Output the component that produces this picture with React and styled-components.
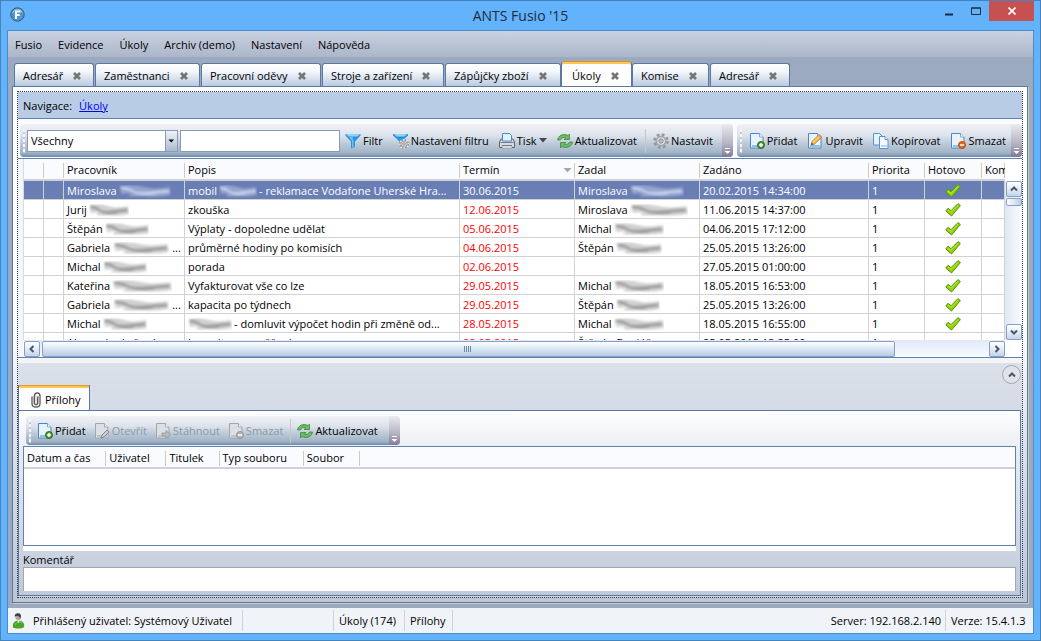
import React from "react";
import styled, { createGlobalStyle, css } from "styled-components";

const GlobalStyle = createGlobalStyle`
  * { box-sizing: border-box; }
  body {
    margin: 0;
    font: 11px/16px "Open Sans", "Noto Sans", sans-serif;
    color: #000;
  }
  button, input, select, textarea { font: inherit; color: inherit; }
  button { border: 0; padding: 0; background: none; white-space: nowrap; }
  svg { display: block; flex: none; }
`;

const line = "#5f83ad";
const tabLine = "#5b799f";

/* ---------- window chrome ---------- */

const Window = styled.div`
  min-height: 100vh;
  display: flex;
  flex-direction: column;
  padding: 0 6px 6px;
  border: 1px solid #4583bd;
  background: #63b2fc;
`;

const TitleBar = styled.header`
  display: grid;
  grid-template-columns: 1fr auto 1fr;
  height: 29px;
`;

const AppIcon = styled.div`
  padding: 6px 0 0 3px;
`;

const Title = styled.h1`
  margin: 0;
  font-size: 14px;
  line-height: 30px;
  font-weight: 400;
  color: #1c2b3c;
`;

const WindowButtons = styled.div`
  display: flex;
  justify-content: flex-end;
  align-items: flex-start;
`;

const WindowButton = styled.button`
  display: grid;
  place-items: center;
  width: ${(p) => (p.$close ? 45 : 27)}px;
  height: 20px;
  background: ${(p) => (p.$close ? "#c75050" : "transparent")};
`;

const Client = styled.div`
  flex: 1;
  display: flex;
  flex-direction: column;
  border: 1px solid #4a8cc8;
  background: #9ba9c1;
`;

const MenuBar = styled.nav`
  display: flex;
  gap: 16px;
  height: 26px;
  padding: 0 7px;
  background: linear-gradient(#c9d2e1, #acb6ca);
`;

const MenuItem = styled.button`
  line-height: 28px;
`;

const TabStrip = styled.div`
  display: flex;
  align-items: flex-end;
  height: 29px;
  padding: 0 6px;
`;

const Tab = styled.div`
  display: flex;
  align-items: center;
  gap: 9px;
  width: ${(p) => p.$width}px;
  height: 23px;
  margin-right: ${(p) => (p.$tight ? 0 : 1)}px;
  padding: 2px 0 0 8px;
  border: 1px solid ${tabLine};
  border-bottom: 0;
  border-radius: 3px 3px 0 0;
  background: linear-gradient(#fff, #f3f6fa 35%, #b9cbe0);
  ${(p) =>
    p.$active &&
    css`
      height: 25px;
      padding: 4px 0 0 10px;
      border-top-color: #e08f2e;
      background: #fdfdfe;
      box-shadow: inset 0 2px #fdc64e, 0 1px #fdfdfe;
    `}
`;

const TabLabel = styled.button``;

const Page = styled.main`
  flex: 1;
  display: flex;
  flex-direction: column;
  margin: 0 5px 5px 4px;
  padding: 4px;
  border: 1px solid ${tabLine};
  box-shadow: 1px 1px #cfcdb8;
  background: linear-gradient(#fff 45%, #e2e6ee 65%, #bbc6d7);
`;

const Frame = styled.div`
  flex: 1;
  display: flex;
  flex-direction: column;
  border: 1px dotted #2d3b52;
`;

const NavPath = styled.div`
  display: flex;
  gap: 7px;
  height: 27px;
  padding: 0 5px;
  line-height: 27px;
  border-bottom: 1px solid ${line};
  background: #b9cce5;
`;

const NavLink = styled.a`
  color: #0000f0;
`;

/* ---------- toolbars ---------- */

const ToolTray = styled.div`
  display: flex;
  gap: 4px;
  padding: 5px 0 1px 2px;
  background: #fafbfe;
`;

const Toolbar = styled.div`
  --tool-pad: ${(p) => (p.$small ? 4 : 5)}px;
  display: flex;
  align-items: center;
  flex: ${(p) => (p.$grow ? "1" : "none")};
  min-width: ${(p) => (p.$small ? 374 : 0)}px;
  height: ${(p) => (p.$small ? 29 : 33)}px;
  padding-left: 3px;
  border-radius: 4px;
  overflow: hidden;
  background: linear-gradient(#f1f1f6, #dde3ec 35%, #bccad8 60%, #9fb3c6 88%, #7288ae);
`;

const Grip = styled.span`
  width: 2px;
  height: 24px;
  margin-right: 2px;
  background: repeating-linear-gradient(#f5f6f8 0 3px, #c3cbd6 3px 5px);
`;

const ToolButton = styled.button`
  display: flex;
  align-items: center;
  gap: 2px;
  padding: 0 var(--tool-pad);
  height: 22px;
  &:disabled { color: #8f99a5; }
`;

const Separator = styled.span`
  width: 1px;
  height: 24px;
  margin: 0 2px 0 3px;
  background: #c6c8bd;
`;

const Overflow = styled.button`
  display: flex;
  align-items: flex-end;
  justify-content: center;
  width: 11px;
  height: 100%;
  margin-left: auto;
  padding-bottom: 2px;
  background: linear-gradient(#eaeaef, #b4b3c2 60%, #85789a);
`;

const SelectBox = styled.label`
  position: relative;
  width: 151px;
  margin-right: 2px;
  svg { position: absolute; right: 1px; top: 1px; pointer-events: none; }
`;

const Select = styled.select`
  display: block;
  width: 100%;
  height: 22px;
  padding: 0 3px;
  appearance: none;
  border: 1px solid #8a9ab2;
  border-radius: 0;
  background: #fff;
`;

const SearchInput = styled.input`
  width: 160px;
  height: 22px;
  border: 1px solid #8a9ab2;
`;

/* ---------- task grid ---------- */

const GridPane = styled.section`
  display: grid;
  grid-template-columns: minmax(0, 1fr) 17px;
  grid-template-rows: 181px 17px;
  padding-left: 5px;
  border: solid ${line};
  border-width: 1px 0;
  background: linear-gradient(90deg, #f4f6fa 5px, #fff 5px);
`;

const Viewport = styled.div`
  overflow: hidden;
  border-left: 1px solid #d6dae2;
`;

const TaskTable = styled.table`
  width: 100%;
  table-layout: fixed;
  border-collapse: separate;
  border-spacing: 0;
`;

const Th = styled.th`
  height: 22px;
  padding: 2px 3px 0;
  text-align: left;
  font-weight: 400;
  white-space: nowrap;
  overflow: hidden;
  border-bottom: 2px solid #cfd0d8;
  background: linear-gradient(#cfcdb8, #cfcdb8) no-repeat right 4px / 1px 15px, #f9fbff;
`;

const ThInner = styled.div`
  display: flex;
  align-items: center;
  justify-content: space-between;
`;

const Row = styled.tr`
  ${(p) =>
    p.$selected &&
    css`
      color: #fff;
      background: #697eb5;
    `}
`;

const Td = styled.td`
  height: 19px;
  padding: 2px 3px 0;
  line-height: 16px;
  border: solid #d2d2d2;
  border-width: 0 1px 1px 0;
  color: ${(p) => (p.$due ? "#f00" : "inherit")};
`;

const CellText = styled.div`
  display: flex;
  align-items: center;
  height: 16px;
  gap: ${(p) => (p.$cut ? 3 : 2)}px;
  justify-content: ${(p) => (p.$center ? "center" : "flex-start")};
  white-space: nowrap;
`;

const VScroll = styled.div`
  display: flex;
  flex-direction: column;
  margin-top: 22px;
  padding-left: 1px;
  background: linear-gradient(90deg, #dfe7f5, #fafcff);
`;

const HScroll = styled.div`
  display: flex;
  margin-left: 1px;
  padding-top: 1px;
  background: linear-gradient(#dfe9f8, #fafcff);
`;

const ScrollButton = styled.button`
  display: grid;
  place-items: center;
  width: 16px;
  height: 16px;
  flex: none;
  border: 1px solid #87a0c1;
  border-radius: 2px;
  background: linear-gradient(#fff, #e6eef8 45%, #c2d4ea);
`;

const HThumb = styled.div`
  flex: 9;
  display: grid;
  place-items: center;
  margin-left: 2px;
  border: 1px solid #87a0c1;
  border-radius: 2px;
  background: linear-gradient(#fff, #d9e5f4 50%, #b9cde6);
`;

const HTrack = styled.div`
  flex: 1;
`;

const VThumb = styled.div`
  height: 8px;
  margin: 1px 0 auto;
  border: 1px solid #87a0c1;
  border-radius: 2px;
  background: linear-gradient(90deg, #fff, #b9cde6);
`;

/* ---------- attachments ---------- */

const Detail = styled.section`
  flex: 1;
  display: flex;
  flex-direction: column;
  margin-top: 5px;
  background: linear-gradient(#dbe1ea, #d2d9e5 60px);
`;

const DetailHeader = styled.div`
  display: flex;
  align-items: flex-end;
  justify-content: space-between;
  height: 47px;
`;

const DetailTab = styled.button`
  display: flex;
  align-items: center;
  gap: 4px;
  width: 72px;
  height: 25px;
  padding: 4px 0 0 12px;
  border: solid ${tabLine};
  border-width: 0 1px;
  background: linear-gradient(#e59a37 1px, #fdc64e 1px 3px, #fdfdfe 3px);
  box-shadow: 0 1px #fdfdfe;
`;

const Collapse = styled.button`
  align-self: flex-start;
  display: grid;
  place-items: center;
  width: 19px;
  height: 19px;
  margin: 2px 1px 0 0;
  border: 1px solid #a7a9ad;
  border-radius: 50%;
  background: #dfe4ec;
`;

const DetailPage = styled.div`
  flex: 1;
  display: flex;
  flex-direction: column;
  margin: 0 1px 1px 0;
  padding: 5px 4px 4px;
  border: 1px solid ${tabLine};
  background: linear-gradient(#fff, #e9ecf2 40px, #bfc9d9);
`;

const DetailTray = styled.div`
  display: flex;
  padding: 0 3px 1px;
`;

const ListBox = styled.div`
  flex: 1;
  border: 1px solid ${line};
  box-shadow: 0 5px #fff;
  background: linear-gradient(#f9fbff 20px, #cfd0d8 20px 22px, #fff 22px);
`;

const FileTable = styled.table`
  width: 336px;
  table-layout: fixed;
  border-spacing: 0;
`;

const CommentLabel = styled.label`
  margin-top: 5px;
  height: 16px;
  line-height: 17px;
`;

const Comment = styled.textarea`
  height: 24px;
  border: 1px solid #a3a7b0;
  border-bottom: 0;
  resize: none;
  background: #fff;
`;

/* ---------- status bar ---------- */

const StatusBar = styled.footer`
  display: flex;
  align-items: center;
  height: 25px;
  padding: 0 6px 0 4px;
  background: #f0f3f8;
`;

const StatusItem = styled.span`
  display: flex;
  align-items: center;
  gap: 8px;
  height: 21px;
  min-width: ${(p) => p.$min || 0}px;
  padding: 0 ${(p) => (p.$last ? 0 : 4)}px 0 ${(p) => (p.$first ? 0 : 5)}px;
  margin-left: ${(p) => (p.$push ? "auto" : 0)};
  border-right: ${(p) => (p.$last ? 0 : "1px solid #cfd2d8")};
`;

/* ---------- icons ---------- */

const Icon = ({ children, size = 16, ...rest }) => (
  <svg width={size} height={size} viewBox="0 0 16 16" fill="none" {...rest}>
    {children}
  </svg>
);

const Cross = () => (
  <svg width="10" height="8" viewBox="0 0 10 8">
    <path d="M2 1l6 6M8 1L2 7" stroke="#757575" strokeWidth="2.700" />
  </svg>
);

const Sheet = ({ gray, x = 1, y = 0 }) => (
  <g transform={`translate(${x} ${y})`}>
    <path d="M.5.5h9l3.500 3.500v11h-12.500z" fill={gray ? "#dcdfe3" : "#e9f3fd"} stroke={gray ? "#a3a8af" : "#4d86c8"} />
    <path d="M2 12h10v2H2z" fill={gray ? "#bfc4ca" : "#8fc0ee"} />
    <path d="M9.500.5v3.500h3.500" fill="#fff" stroke={gray ? "#a3a8af" : "#7aa8dc"} />
  </g>
);

const AddIcon = () => (
  <Icon>
    <Sheet />
    <circle cx="12" cy="12" r="3.500" fill="#4f9a35" stroke="#2f6d1d" />
    <path d="M12 10v4M10 12h4" stroke="#fff" strokeWidth="1.400" />
  </Icon>
);

const EditIcon = ({ gray }) => (
  <Icon>
    <Sheet gray={gray} />
    {gray ? (
      <path d="M7 15l1-3 5-5 2 2-5 5z" fill="#c8ccd0" stroke="#858b92" />
    ) : (
      <>
        <path d="M4 12l1-3.500 7-7 2.800 2.500-7.300 7.200z" fill="#f3b94a" stroke="#b77a26" strokeWidth=".8" />
        <path d="M6 9.500l7-7" stroke="#fbe08e" />
        <path d="M11 2.500l1.300-1.300 2.700 2.500-1.400 1.300z" fill="#e58b82" />
        <path d="M4 12l.7-2.300 1.700 1.600z" fill="#5a4630" />
      </>
    )}
  </Icon>
);

const CopyIcon = () => (
  <Icon>
    <path d="M.5.5h6l2.500 2.500v9h-8.500z" fill="#e5f1fd" stroke="#5c93d1" />
    <path d="M6.500 3.500h5.500l3 3v9h-8.500z" fill="#f2f8fe" stroke="#5c93d1" />
    <path d="M12 3.500v3h3" fill="#fff" stroke="#5c93d1" />
    <path d="M8 12h6v2H8z" fill="#b4d5f5" />
  </Icon>
);

const RemoveIcon = ({ gray }) => (
  <Icon>
    <Sheet gray={gray} />
    <circle cx="12" cy="12" r="3.500" fill={gray ? "#b1b5ba" : "#e8691d"} stroke={gray ? "#92979d" : "#c04d0e"} />
    <path d="M10 12h4" stroke="#fff" strokeWidth="1.500" />
  </Icon>
);

const DownloadIcon = () => (
  <Icon>
    <Sheet gray />
    <path d="M7 10h4V7.500l4.500 4-4.500 4V13H7z" fill="#b9bdc2" stroke="#91969c" strokeWidth=".8" />
  </Icon>
);

const FilterIcon = () => (
  <Icon>
    <path d="M.5 1h15v1.500L10 8.500V14l-4 1.500v-7L.5 2.500z" fill="#2a93dc" />
    <path d="M1 1h14l-2.500 2.500h-9z" fill="#8fd4f8" />
    <path d="M4 4h3.500l1 4v6l-1.500.7V8z" fill="#6ec0f2" />
  </Icon>
);

const Gear = ({ scale = 1, x = 0, y = 0 }) => (
  <g transform={`translate(${x} ${y}) scale(${scale})`}>
    <circle cx="8" cy="8" r="6.500" stroke="#94989d" strokeWidth="2.600" strokeDasharray="2.800 2.305" />
    <circle cx="8" cy="8" r="4.600" fill="#e2e4e6" stroke="#a2a6aa" strokeWidth="1.600" />
    <circle cx="8" cy="8" r="2.200" fill="#b5c4d1" stroke="#8b8f94" />
  </g>
);

const FilterGearIcon = () => (
  <Icon>
    <path d="M0 1h15v1.500L9 8v4H6V8L0 2.500z" fill="#2a93dc" />
    <path d="M1 1h13l-2.500 2.500h-8z" fill="#8fd4f8" />
    <circle cx="11" cy="11" r="5" fill="#eceef0" />
    <Gear scale={0.65} x={5.800} y={5.800} />
  </Icon>
);

const PrintIcon = () => (
  <Icon>
    <path d="M2 6h12l1.500 3v5.500H.5V9z" fill="#d6dade" stroke="#5d6570" />
    <path d="M3.500 8V.5h7l2 2V8z" fill="#e4f1fe" stroke="#4a8cd2" />
    <path d="M1.500 9.500h13M3 12.500h10" stroke="#777e87" />
    <path d="M3 13h10v2H3z" fill="#fff" stroke="#777e87" strokeWidth=".6" />
  </Icon>
);

const RefreshIcon = () => (
  <Icon>
    <path d="M.5 7C1 3.500 4 1.500 7.500 1.500c1.500 0 2.500.5 3.500 1.200L12.500 1v5.500H7L8.800 4.800C7 4 4.500 4.600 3.500 7z" fill="#6cba62" stroke="#3d8a42" strokeWidth=".8" />
    <path d="M15.500 9c-.5 3.500-3.500 5.500-7 5.500-1.500 0-2.500-.5-3.500-1.200L3.500 15V9.500H9l-1.800 1.700c1.800.8 4.300.2 5.300-2.200z" fill="#6cba62" stroke="#3d8a42" strokeWidth=".8" />
  </Icon>
);

const CheckIcon = () => (
  <svg width="16" height="14" viewBox="0 0 16 14">
    <path d="M.8 8L3 5.300l3 2.400L13 .6l2.400 2L6.500 13z" fill="#8fd400" stroke="#5b8f12" />
    <path d="M3 7l3 2.300 7.200-7" fill="none" stroke="#b6ec3c" />
  </svg>
);

const ClipIcon = () => (
  <svg width="10" height="16" viewBox="0 0 10 16" fill="none">
    <path d="M1 4.500v7C1 14 2.500 15.200 5 15.200S9 14 9 11.500V4C9 1.800 8 .8 6.200.8S3.500 1.800 3.500 4v7c0 1.200.5 1.800 1.500 1.800s1.500-.6 1.500-1.800V4.500" stroke="#555" strokeWidth="1.300" />
    <path d="M2.300 4v8M7.800 4v8" stroke="#aaa" />
  </svg>
);

const UserIcon = () => (
  <svg width="13" height="16" viewBox="0 0 13 16">
    <path d="M1 14.500C0 10.500 2.500 7.500 6.500 7.500S13 10.500 12 14c-2 2-9 2-11 .5z" fill="#4aa52b" />
    <path d="M3 12c1-3 5-4 7-2" stroke="#7fca55" fill="none" />
    <circle cx="6.300" cy="4.300" r="2.800" fill="#b3a598" />
    <path d="M2.800 3.800C2.300 1 4.500 0 6.500.3 9.500.8 9.200 4 8.200 5.500 8 3.800 6 3 4.800 2.800z" fill="#3d3d3d" />
    <path d="M5.200 7.500l1.300 2.500L7.800 7.500z" fill="#fff" />
  </svg>
);

const LogoIcon = () => (
  <svg width="15" height="15" viewBox="0 0 15 15" fill="none">
    <circle cx="7.500" cy="7.500" r="6.700" fill="#4f95cd" stroke="#3a5a75" />
    <path d="M2.500 6a5.300 5.300 0 0 1 10 0" stroke="#a5cdec" />
    <path d="M6 12V4.500h4.500M6 8h3.800" stroke="#fff" strokeWidth="2" />
  </svg>
);

const Chevron = ({ turn = 0 }) => (
  <svg width="8" height="8" viewBox="0 0 8 8" fill="none">
    <path d="M1 5.500l3-3 3 3" stroke="#4c5663" strokeWidth="2" transform={`rotate(${turn} 4 4)`} />
  </svg>
);

const Caret = ({ width = 8, color = "#3f4855" }) => (
  <svg width={width} height="5" viewBox="0 0 8 5">
    <path d="M0 0h8L4 4.500z" fill={color} />
  </svg>
);

const SelectArrow = () => (
  <svg width="12" height="20" viewBox="0 0 12 20">
    <defs>
      <linearGradient id="arrow-face" x2="0" y2="1">
        <stop stopColor="#f1f4f8" />
        <stop offset="1" stopColor="#a9bbcd" />
      </linearGradient>
    </defs>
    <path d="M0 0h12v20H0z" fill="url(#arrow-face)" />
    <path d="M.5 0v20" stroke="#8a9ab2" />
    <path d="M3.500 8.500h5.500L6.200 11.500z" fill="#000" />
  </svg>
);

const OverflowMark = () => (
  <svg width="7" height="7" viewBox="0 0 7 7">
    <path d="M1 .5h5" stroke="#fff" />
    <path d="M.5 3h6L3.500 6z" fill="#fff" />
  </svg>
);

/* A surname smeared out for privacy. */
const Smear = ({ width, light }) => {
  const tone = light ? "#d5ddf3" : "#8c8c8c";
  return (
    <svg width={width} height="14" viewBox="0 0 60 14" preserveAspectRatio="none">
      <defs>
        <filter id="smear" x="-10%" y="-30%" width="120%" height="160%">
          <feGaussianBlur stdDeviation="1.800 1.100" />
        </filter>
      </defs>
      <g filter="url(#smear)" fill="none" stroke={tone}>
        <path d="M2 6q14-2 26 1t31 0" strokeWidth="8" opacity=".4" />
        <path d="M2 4q8 0 13 3t18 2 25-2" strokeWidth="3" opacity=".7" />
        <path d="M12 11q14 1 30-1" strokeWidth="2" opacity=".5" />
      </g>
    </svg>
  );
};

/* ---------- data ---------- */

const menu = ["Fusio", "Evidence", "Úkoly", "Archiv (demo)", "Nastavení", "Nápověda"];

const tabs = [
  ["Adresář", 80],
  ["Zaměstnanci", 105],
  ["Pracovní oděvy", 120],
  ["Stroje a zařízení", 122],
  ["Zápůjčky zboží", 116, "tight"],
  ["Úkoly", 71, "active"],
  ["Komise", 77],
  ["Adresář", 80],
];

const columns = [
  ["", 20], ["", 20], ["Pracovník", 121], ["Popis", 275], ["Termín", 115],
  ["Zadal", 125], ["Zadáno", 169], ["Priorita", 56], ["Hotovo", 57], ["Kom", null],
];

const tasks = [
  { who: "Miroslava", smear: 52, text: "mobil", mid: 38, rest: "- reklamace Vodafone Uherské Hra...", due: "30.06.2015", by: "Miroslava", bySmear: 54, at: "20.02.2015 14:34:00", done: true },
  { who: "Jurij", smear: 40, text: "zkouška", due: "12.06.2015", by: "Miroslava", bySmear: 58, at: "11.06.2015 14:37:00", done: true },
  { who: "Štěpán", smear: 44, text: "Výplaty - dopoledne udělat", due: "05.06.2015", by: "Michal", bySmear: 50, at: "04.06.2015 17:12:00", done: true },
  { who: "Gabriela", smear: 56, cut: true, text: "průměrné hodiny po komisích", due: "04.06.2015", by: "Štěpán", bySmear: 46, at: "25.05.2015 13:26:00", done: true },
  { who: "Michal", smear: 44, text: "porada", due: "02.06.2015", at: "27.05.2015 01:00:00", done: true },
  { who: "Kateřina", smear: 60, text: "Vyfakturovat vše co lze", due: "29.05.2015", by: "Michal", bySmear: 50, at: "18.05.2015 16:53:00", done: true },
  { who: "Gabriela", smear: 56, cut: true, text: "kapacita po týdnech", due: "29.05.2015", by: "Štěpán", bySmear: 44, at: "25.05.2015 13:26:00", done: true },
  { who: "Michal", smear: 44, mid: 44, rest: "- domluvit výpočet hodin při změně od...", due: "28.05.2015", by: "Michal", bySmear: 50, at: "18.05.2015 16:55:00", done: true },
  { who: "Alexandra Lažová", text: "kapacita pro měření", due: "28.05.2015", by: "Štěpán Beniáč", at: "25.05.2015 13:25:00" },
];

const fileColumns = [["Datum a čas", 82], ["Uživatel", 60], ["Titulek", 53], ["Typ souboru", 84], ["Soubor", 56]];

/* ---------- parts ---------- */

const Tool = ({ icon, label, disabled, menu: hasMenu }) => (
  <ToolButton type="button" disabled={disabled}>
    {icon}
    {label}
    {hasMenu && <Caret />}
  </ToolButton>
);

const MoreButton = () => (
  <Overflow type="button" aria-label="Další příkazy">
    <OverflowMark />
  </Overflow>
);

const TaskRow = ({ task, selected }) => (
  <Row $selected={selected}>
    <Td />
    <Td />
    <Td>
      <CellText $cut={task.cut}>
        {task.who}
        {task.smear && <Smear width={task.smear} light={selected} />}
        {task.cut && "..."}
      </CellText>
    </Td>
    <Td>
      <CellText>
        {task.text}
        {task.mid && <Smear width={task.mid} light={selected} />}
        {task.rest}
      </CellText>
    </Td>
    <Td $due={!selected}>{task.due}</Td>
    <Td>
      <CellText>
        {task.by}
        {task.bySmear && <Smear width={task.bySmear} light={selected} />}
      </CellText>
    </Td>
    <Td>{task.at}</Td>
    <Td>1</Td>
    <Td>
      <CellText $center>{task.done && <CheckIcon />}</CellText>
    </Td>
    <Td />
  </Row>
);

export default function App() {
  return (
    <>
      <GlobalStyle />
      <Window>
        <TitleBar>
          <AppIcon><LogoIcon /></AppIcon>
          <Title>ANTS Fusio '15</Title>
          <WindowButtons>
            <WindowButton type="button" aria-label="Minimalizovat">
              <svg width="8" height="10"><path d="M0 8.500h8" stroke="#1c2b3c" strokeWidth="2" /></svg>
            </WindowButton>
            <WindowButton type="button" aria-label="Maximalizovat">
              <svg width="10" height="8"><path d="M.5 1h9v6.500h-9zM0 1h10" fill="none" stroke="#1c2b3c" /></svg>
            </WindowButton>
            <WindowButton type="button" $close aria-label="Zavřít">
              <svg width="8" height="8"><path d="M.5.5l7 7M7.500.5l-7 7" stroke="#fff" strokeWidth="1.600" /></svg>
            </WindowButton>
          </WindowButtons>
        </TitleBar>

        <Client>
          <MenuBar>
            {menu.map((m) => <MenuItem type="button" key={m}>{m}</MenuItem>)}
          </MenuBar>

          <TabStrip>
            {tabs.map(([label, width, state], i) => (
              <Tab key={i} $width={width} $active={state === "active"} $tight={Boolean(state)}>
                <TabLabel type="button">{label}</TabLabel>
                <button type="button" aria-label={`Zavřít ${label}`}><Cross /></button>
              </Tab>
            ))}
          </TabStrip>

          <Page>
            <Frame>
              <NavPath>
                Navigace: <NavLink href="#ukoly">Úkoly</NavLink>
              </NavPath>

              <ToolTray>
                <Toolbar $grow>
                  <Grip />
                  <SelectBox>
                    <Select aria-label="Pohled" defaultValue="Všechny">
                      <option>Všechny</option>
                    </Select>
                    <SelectArrow />
                  </SelectBox>
                  <SearchInput type="text" aria-label="Hledat" />
                  <Tool icon={<FilterIcon />} label="Filtr" />
                  <Tool icon={<FilterGearIcon />} label="Nastavení filtru" />
                  <Tool icon={<PrintIcon />} label="Tisk" menu />
                  <Tool icon={<RefreshIcon />} label="Aktualizovat" />
                  <Separator />
                  <Tool icon={<Icon><Gear /></Icon>} label="Nastavit" />
                  <MoreButton />
                </Toolbar>
                <Toolbar>
                  <Grip />
                  <Tool icon={<AddIcon />} label="Přidat" />
                  <Tool icon={<EditIcon />} label="Upravit" />
                  <Tool icon={<CopyIcon />} label="Kopírovat" />
                  <Tool icon={<RemoveIcon />} label="Smazat" />
                  <MoreButton />
                </Toolbar>
              </ToolTray>

              <GridPane>
                <Viewport>
                  <TaskTable>
                    <colgroup>
                      {columns.map(([, w], i) => <col key={i} width={w || undefined} />)}
                    </colgroup>
                    <thead>
                      <tr>
                        {columns.map(([label], i) => (
                          <Th key={i}>
                            <ThInner>
                              {label}
                              {label === "Termín" && <Caret width={9} color="#a9a99f" />}
                            </ThInner>
                          </Th>
                        ))}
                      </tr>
                    </thead>
                    <tbody>
                      {tasks.map((t, i) => <TaskRow key={i} task={t} selected={i === 0} />)}
                    </tbody>
                  </TaskTable>
                </Viewport>
                <VScroll>
                  <ScrollButton type="button" aria-label="Nahoru"><Chevron /></ScrollButton>
                  <VThumb />
                  <ScrollButton type="button" aria-label="Dolů"><Chevron turn={180} /></ScrollButton>
                </VScroll>
                <HScroll>
                  <ScrollButton type="button" aria-label="Vlevo"><Chevron turn={-90} /></ScrollButton>
                  <HThumb>
                    <svg width="8" height="6"><path d="M.5 0v6M2.500 0v6M4.500 0v6M6.500 0v6" stroke="#7088a8" /></svg>
                  </HThumb>
                  <HTrack />
                  <ScrollButton type="button" aria-label="Vpravo"><Chevron turn={90} /></ScrollButton>
                </HScroll>
              </GridPane>

              <Detail>
                <DetailHeader>
                  <DetailTab type="button"><ClipIcon />Přílohy</DetailTab>
                  <Collapse type="button" aria-label="Sbalit"><Chevron /></Collapse>
                </DetailHeader>
                <DetailPage>
                  <DetailTray>
                    <Toolbar $small>
                      <Grip />
                      <Tool icon={<AddIcon />} label="Přidat" />
                      <Tool icon={<EditIcon gray />} label="Otevřít" disabled />
                      <Tool icon={<DownloadIcon />} label="Stáhnout" disabled />
                      <Tool icon={<RemoveIcon gray />} label="Smazat" disabled />
                      <Separator />
                      <Tool icon={<RefreshIcon />} label="Aktualizovat" />
                      <MoreButton />
                    </Toolbar>
                  </DetailTray>
                  <ListBox>
                    <FileTable>
                      <colgroup>
                        {fileColumns.map(([label, w]) => <col key={label} width={w} />)}
                      </colgroup>
                      <thead>
                        <tr>{fileColumns.map(([label]) => <Th key={label}>{label}</Th>)}</tr>
                      </thead>
                    </FileTable>
                  </ListBox>
                  <CommentLabel htmlFor="comment">Komentář</CommentLabel>
                  <Comment id="comment" />
                </DetailPage>
              </Detail>
            </Frame>
          </Page>

          <StatusBar>
            <StatusItem $first $min={231}><UserIcon />Přihlášený uživatel: Systémový Uživatel</StatusItem>
            <StatusItem $min={91} />
            <StatusItem $min={71}>Úkoly (174)</StatusItem>
            <StatusItem $min={48}>Přílohy</StatusItem>
            <StatusItem $push>Server: 192.168.2.140</StatusItem>
            <StatusItem $last $min={81}>Verze: 15.4.1.3</StatusItem>
          </StatusBar>
        </Client>
      </Window>
    </>
  );
}
